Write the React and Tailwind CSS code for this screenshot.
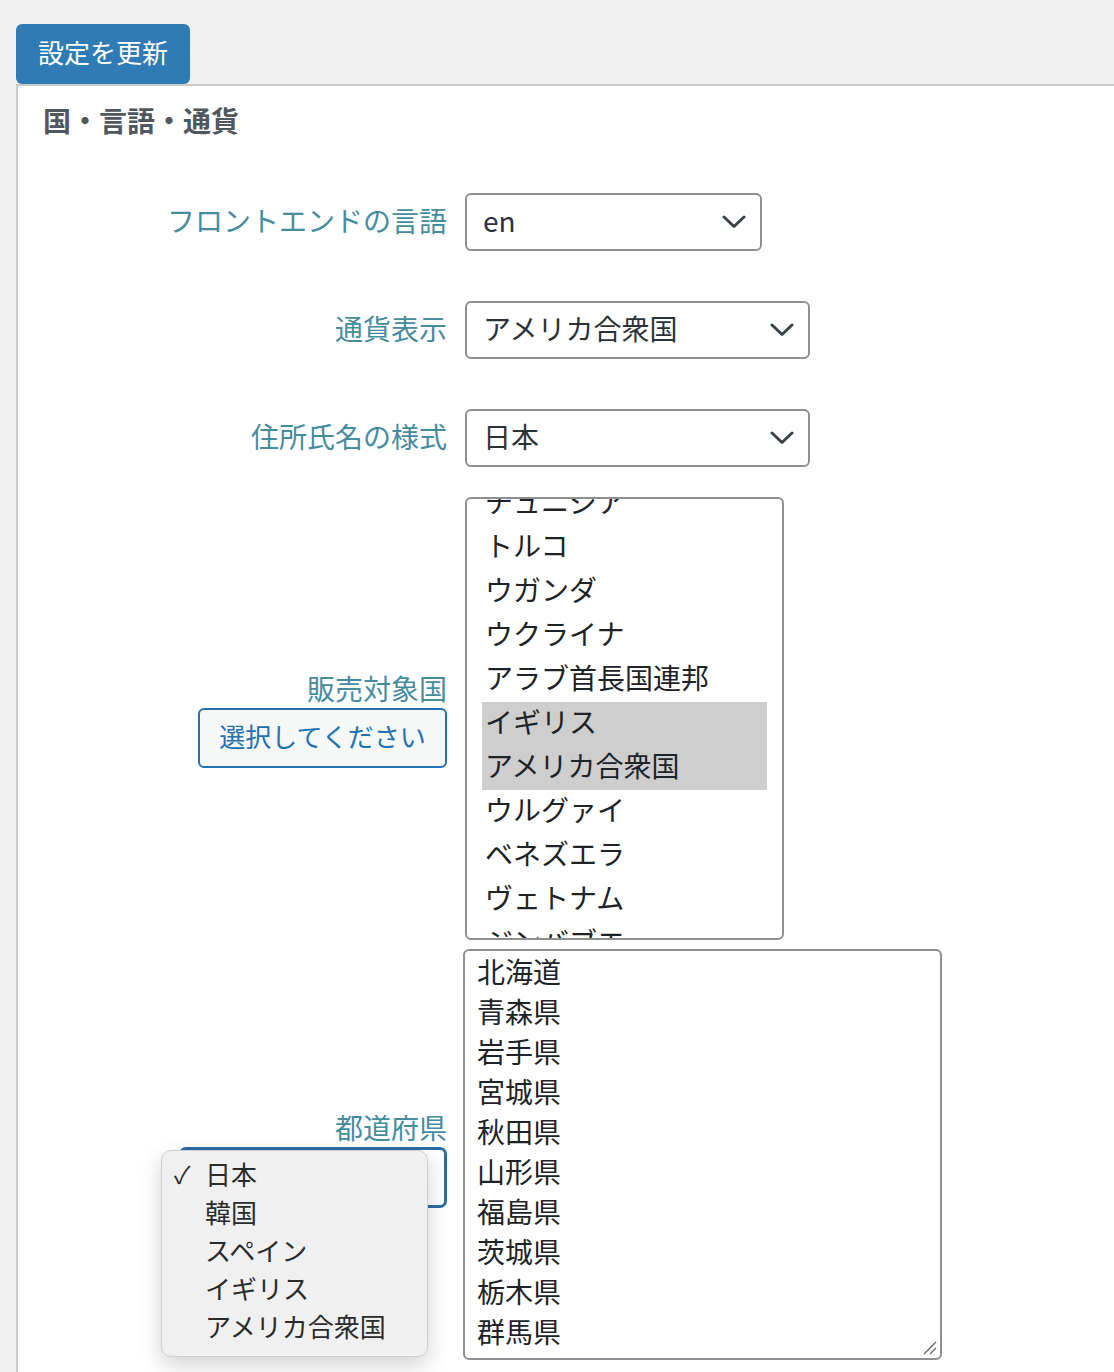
import React from 'react';

const countries = [
  'チュニジア',
  'トルコ',
  'ウガンダ',
  'ウクライナ',
  'アラブ首長国連邦',
  'イギリス',
  'アメリカ合衆国',
  'ウルグァイ',
  'ベネズエラ',
  'ヴェトナム',
  'ジンバブエ',
];
const selectedCountries = ['イギリス', 'アメリカ合衆国'];

const prefectures = ['北海道', '青森県', '岩手県', '宮城県', '秋田県', '山形県', '福島県', '茨城県', '栃木県', '群馬県'];

const addressMenu = ['日本', '韓国', 'スペイン', 'イギリス', 'アメリカ合衆国'];

const Chevron = () => (
  <svg width="24" height="14" viewBox="0 0 24 14" fill="none">
    <polyline points="2,2 12,11.5 22,2" stroke="#3c434a" strokeWidth="3" strokeLinecap="round" strokeLinejoin="round" />
  </svg>
);

const Select = ({ value, className }) => (
  <div
    className={
      'flex h-[58px] items-center justify-between rounded-[6px] border-2 border-[#8c8f94] bg-white pl-[16px] pr-[14px] text-[28px] leading-[40px] text-[#2c3338] ' +
      className
    }
  >
    <span className="pb-[4px]">{value}</span>
    <Chevron />
  </div>
);

const Row = ({ label, children, className = '' }) => (
  <div className={'flex items-center ' + className}>
    <div className="w-[429px] shrink-0 text-right">{label}</div>
    <div className="ml-[18px]">{children}</div>
  </div>
);

const Label = ({ children, className = '' }) => (
  <div className={'text-[28px] text-[#468c9f] ' + className}>{children}</div>
);

export default function App() {
  return (
    <div className="min-h-screen bg-[#f0f0f1] pl-[16px] pt-[24px] font-['Noto_Sans_CJK_JP',sans-serif]">
      {/* 更新ボタン */}
      <button className="h-[60px] w-[174px] rounded-[6px] bg-[#2f7bb5] pb-[4px] text-[26px] leading-[36px] text-white">
        設定を更新
      </button>

      {/* パネル */}
      <div className="min-h-[1300px] border-l-2 border-t-2 border-[#c8cacd] bg-white">
        <h2 className="pl-[25px] pt-[14px] text-[28px] font-bold leading-[40px] text-[#50575e]">国・言語・通貨</h2>

        <Row className="mt-[53px]" label={<Label className="pb-[4px] leading-[40px]">フロントエンドの言語</Label>}>
          <Select value="en" className="w-[297px]" />
        </Row>

        <Row className="mt-[50px]" label={<Label className="pb-[4px] leading-[40px]">通貨表示</Label>}>
          <Select value="アメリカ合衆国" className="w-[345px]" />
        </Row>

        <Row className="mt-[50px]" label={<Label className="pb-[4px] leading-[40px]">住所氏名の様式</Label>}>
          <Select value="日本" className="w-[345px]" />
        </Row>

        {/* 販売対象国 */}
        <Row
          className="mt-[30px]"
          label={
            <div className="flex flex-col items-end">
              <Label className="leading-[36px]">販売対象国</Label>
              <button className="mt-[2px] h-[60px] w-[249px] rounded-[6px] border-2 border-[#2271b1] bg-[#f6f7f7] pb-[4px] text-[26px] text-[#2271b1]">
                選択してください
              </button>
            </div>
          }
        >
          <div className="h-[443px] w-[319px] overflow-hidden rounded-[6px] border-2 border-[#8c8f94] bg-white px-[15px]">
            <div className="mt-[-17px]">
              {countries.map((c) => (
                <div
                  key={c}
                  className={
                    'h-[44px] pl-[3px] text-[28px] leading-[38px] text-[#1d2327] ' +
                    (selectedCountries.includes(c) ? 'bg-[#cecece]' : '')
                  }
                >
                  {c}
                </div>
              ))}
            </div>
          </div>
        </Row>

        {/* 都道府県 */}
        <Row
          className="mt-[9px]"
          label={
            <div className="flex flex-col items-end pt-[7px]">
              <Label className="leading-[36px]">都道府県</Label>
              <div className="relative mt-[2px] h-[61px] w-[268px] rounded-[7px] border-[3px] border-[#2a6ea6] bg-white">
                <div className="absolute left-[-21px] top-0 z-10 h-[207px] w-[267px] rounded-[10px] border border-[#cfcfd1] bg-[#f0f0f1] pt-[4px] text-left shadow-[0_8px_22px_rgba(0,0,0,0.18)]">
                  {addressMenu.map((m, i) => (
                    <div key={m} className="flex h-[38px] items-center text-[26px] leading-[38px] text-[#2b2b2b]">
                      <span className="w-[43px] shrink-0 pl-[12px] text-[24px]">{i === 0 ? '✓' : ''}</span>
                      <span>{m}</span>
                    </div>
                  ))}
                </div>
              </div>
            </div>
          }
        >
          <div className="relative ml-[-2px] h-[411px] w-[479px] overflow-hidden rounded-[6px] border-2 border-[#8c8f94] bg-white pl-[12px] pt-[2px]">
            {prefectures.map((p) => (
              <div key={p} className="h-[40px] text-[28px] leading-[36px] text-[#1d2327]">
                {p}
              </div>
            ))}
            <svg className="absolute bottom-[2px] right-[2px]" width="16" height="16" viewBox="0 0 16 16">
              <line x1="2" y1="14" x2="14" y2="2" stroke="#6b6f74" strokeWidth="1.5" />
              <line x1="8" y1="14" x2="14" y2="8" stroke="#6b6f74" strokeWidth="1.5" />
            </svg>
          </div>
        </Row>
      </div>
    </div>
  );
}
